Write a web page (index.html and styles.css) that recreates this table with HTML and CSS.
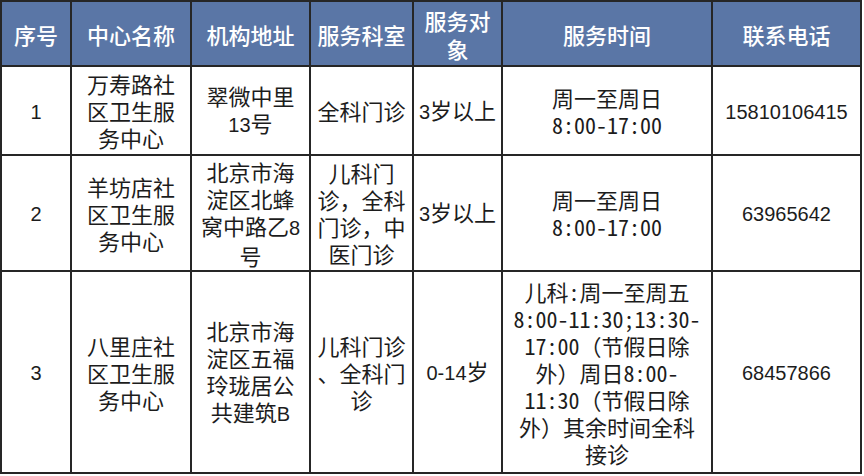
FILE: index.html
```html
<!DOCTYPE html>
<html lang="zh-CN">
<head>
<meta charset="utf-8">
<title>社区卫生服务中心</title>
<link rel="stylesheet" href="styles.css">
</head>
<body>
<div class="table">
  <div class="cell head"><div>序号</div></div>
  <div class="cell head"><div>中心名称</div></div>
  <div class="cell head"><div>机构地址</div></div>
  <div class="cell head"><div>服务科室</div></div>
  <div class="cell head"><div>服务对<br>象</div></div>
  <div class="cell head"><div>服务时间</div></div>
  <div class="cell head"><div>联系电话</div></div>

  <div class="cell"><div><span class="num">1</span></div></div>
  <div class="cell"><div>万寿路社<br>区卫生服<br>务中心</div></div>
  <div class="cell"><div>翠微中里<br><span class="num">13</span>号</div></div>
  <div class="cell"><div>全科门诊</div></div>
  <div class="cell"><div><span class="num">3</span>岁以上</div></div>
  <div class="cell"><div>周一至周日<br><span class="t">8:00-17:00</span></div></div>
  <div class="cell"><div><span class="num">15810106415</span></div></div>

  <div class="cell"><div><span class="num">2</span></div></div>
  <div class="cell"><div>羊坊店社<br>区卫生服<br>务中心</div></div>
  <div class="cell"><div>北京市海<br>淀区北蜂<br>窝中路乙<span class="num">8</span><br>号</div></div>
  <div class="cell"><div>儿科门<br>诊，全科<br>门诊，中<br>医门诊</div></div>
  <div class="cell"><div><span class="num">3</span>岁以上</div></div>
  <div class="cell"><div>周一至周日<br><span class="t">8:00-17:00</span></div></div>
  <div class="cell"><div><span class="num">63965642</span></div></div>

  <div class="cell"><div><span class="num">3</span></div></div>
  <div class="cell"><div>八里庄社<br>区卫生服<br>务中心</div></div>
  <div class="cell"><div>北京市海<br>淀区五福<br>玲珑居公<br>共建筑<span class="num">B</span></div></div>
  <div class="cell"><div>儿科门诊<br>、全科门<br>诊</div></div>
  <div class="cell"><div><span class="num">0-14</span>岁</div></div>
  <div class="cell"><div>儿科<span class="t">:</span>周一至周五<br><span class="t">8:00-11:30;13:30-</span><br><span class="t">17:00</span>（节假日除<br>外）周日<span class="t">8:00-</span><br><span class="t">11:30</span>（节假日除<br>外）其余时间全科<br>接诊</div></div>
  <div class="cell"><div><span class="num">68457866</span></div></div>
</div>
</body>
</html>
```

FILE: styles.css
```css
html, body {
  margin: 0;
  padding: 0;
  background: #ffffff;
}

.table {
  display: grid;
  grid-template-columns: 68px 118px 117px 101px 87px 208px 147px;
  grid-template-rows: 63px 87px 114px 200px;
  gap: 2px;
  padding: 2px;
  width: 862px;
  box-sizing: border-box;
  background: #262626;
  font-family: "Noto Sans CJK SC", "Noto Sans", sans-serif;
  font-size: 22px;
  line-height: 27px;
  color: #1c1c1c;
}

.cell {
  background: #ffffff;
  display: flex;
  align-items: center;
  justify-content: center;
  text-align: center;
  white-space: nowrap;
}

.cell.head {
  background: #5a76a6;
  color: #ffffff;
  font-weight: 500;
  line-height: 28px;
}

.num {
  font-family: "Liberation Sans", Arial, sans-serif;
  font-size: 20px;
}

.t {
  font-feature-settings: "hwid" 1;
}
```
